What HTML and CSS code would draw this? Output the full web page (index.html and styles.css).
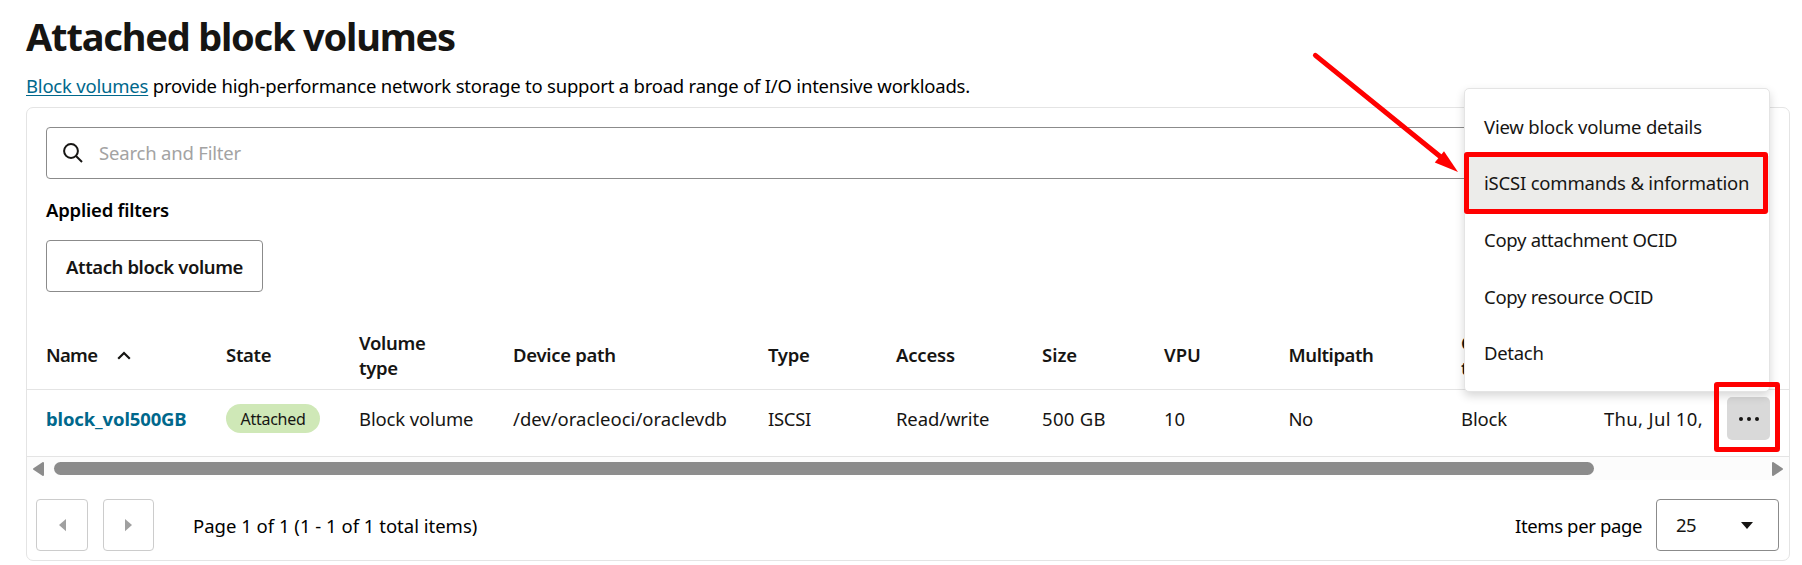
FILE: index.html
```html
<!DOCTYPE html>
<html lang="en">
<head>
<meta charset="utf-8">
<title>Attached block volumes</title>
<link rel="stylesheet" href="styles.css">
</head>
<body>
<main class="page">
  <h1 class="title">Attached block volumes</h1>
  <p class="intro"><a class="intro-link" href="#">Block volumes</a> provide high-performance network storage to support a broad range of I/O intensive workloads.</p>
  <section class="card">
    <div class="search">
      <svg class="search-icon" viewBox="0 0 20 20"><circle cx="8" cy="8" r="6.9"/><path d="M13 13l6 6"/></svg>
      <span class="placeholder">Search and Filter</span>
    </div>
    <h2 class="filters">Applied filters</h2>
    <button class="attach">Attach block volume</button>
    <div class="row head">
      <div class="one name">Name<svg class="sort" viewBox="0 0 14 9"><path d="M1.2 7.8L7 2l5.800 5.800"/></svg></div>
      <div class="one">State</div>
      <div>Volume<br>type</div>
      <div class="one">Device path</div>
      <div class="one">Type</div>
      <div class="one access">Access</div>
      <div class="one plain">Size</div>
      <div class="one plain">VPU</div>
      <div class="one multi">Multipath</div>
      <div class="clip">C<br>t</div>
      <div></div>
    </div>
    <div class="row data">
      <div><a class="vol" href="#">block_vol500GB</a></div>
      <div><span class="pill">Attached</span></div>
      <div>Block volume</div>
      <div class="plain">/dev/oracleoci/oraclevdb</div>
      <div class="iscsi">ISCSI</div>
      <div>Read/write</div>
      <div class="wide">500 GB</div>
      <div>10</div>
      <div class="no">No</div>
      <div>Block</div>
      <div class="wide">Thu, Jul 10,</div>
      <div><button class="more"><i></i><i></i><i></i></button></div>
    </div>
    <div class="scroll">
      <svg class="tri" viewBox="0 0 11 14"><path d="M10 1v12L1 7z"/></svg>
      <div class="thumb"></div>
      <svg class="tri end" viewBox="0 0 11 14"><path d="M1 1v12l9-6z"/></svg>
    </div>
    <div class="pager">
      <button class="nav"><svg class="caret" viewBox="0 0 8 14"><path d="M8 0v14L0 7z"/></svg></button>
      <button class="nav next"><svg class="caret" viewBox="0 0 8 14"><path d="M0 0v14l8-7z"/></svg></button>
      <span class="range">Page 1 of 1 (1 - 1 of 1 total items)</span>
      <span class="per-page">Items per page</span>
      <div class="select">25<svg class="drop" viewBox="0 0 12 7"><path d="M0 0h12L6 7z"/></svg></div>
    </div>
  </section>
</main>
<ul class="menu">
  <li>View block volume details</li>
  <li class="active">iSCSI commands &amp; information</li>
  <li class="tight">Copy attachment OCID</li>
  <li class="tight">Copy resource OCID</li>
  <li class="tight">Detach</li>
</ul>
<svg class="arrow" viewBox="0 0 160 130"><path class="shaft" d="M11.400 10.400L138 113"/><path d="M154 127L130.800 117.500 140 106.300z"/></svg>
<div class="mark mark-item"></div>
<div class="mark mark-more"></div>
</body>
</html>
```
FILE: styles.css
```css
* { box-sizing: border-box; }
body {
  margin: 0;
  height: 565px;
  overflow: hidden;
  background: #fff;
  color: #161513;
  font: 18.5px/24px "Noto Sans", "Open Sans", sans-serif;
}
button { font: inherit; color: inherit; background: #fff; padding: 0; }
.page { padding: 13px 12px 0 26px; }
.title { margin: 0; font-size: 38px; line-height: 46px; font-weight: 700; letter-spacing: -1.2px; white-space: nowrap; }
.intro { margin: 15px 0 9px; color: #000; letter-spacing: -.21px; white-space: nowrap; }
.intro-link { color: #00688c; text-underline-offset: 2px; text-decoration-thickness: 1px; }
.card { height: 454px; border: 1px solid #e4e4e4; border-radius: 7px; }
.search {
  display: flex; align-items: center; height: 52px; margin: 19px 19px 0;
  padding-left: 16px; border: 1px solid #8b8b8b; border-radius: 4px;
}
.search-icon { width: 20px; height: 20px; fill: none; stroke: #161513; stroke-width: 2; }
.placeholder { margin-left: 16px; color: #a3a3a3; letter-spacing: -.19px; }
.filters { margin: 19px 19px 18px; font-size: 18.5px; line-height: 24px; font-weight: 600; color: #000; letter-spacing: -.21px; }
.attach {
  display: block; width: 217px; height: 52px; margin-left: 19px; padding-top: 1px;
  border: 1px solid #8b8b8b; border-radius: 4px; font-weight: 600; letter-spacing: -.4px; white-space: nowrap;
}
.row {
  display: grid; align-items: center; padding-left: 19px;
  grid-template-columns: 180px 133px 154px 255px 128px 146px 122px 124.5px 172.5px 143px 123px 43px;
  border-bottom: 1px solid #e4e4e4; white-space: nowrap;
}
.head { height: 69px; margin-top: 29px; font-weight: 600; line-height: 25px; letter-spacing: -.3px; }
.one { padding-bottom: 2px; }
.name { letter-spacing: -.7px; }
.access { letter-spacing: -.18px; }
.multi { letter-spacing: -.41px; }
.clip { width: 10px; overflow: hidden; }
.sort { width: 14px; height: 9px; margin: 0 0 2px 20px; fill: none; stroke: #161513; stroke-width: 2.200; }
.data { height: 67px; padding-bottom: 9px; letter-spacing: -.14px; }
.vol { color: #00688c; font-weight: 700; text-decoration: none; }
.pill {
  display: flex; align-items: center; justify-content: center; width: 94px; height: 29px;
  border-radius: 15px; background: #cfe8b7; font-size: 16px; letter-spacing: -.27px;
}
.plain { letter-spacing: 0; }
.iscsi { letter-spacing: -.31px; }
.no { letter-spacing: -.6px; }
.wide { letter-spacing: .32px; }
.more {
  display: flex; align-items: center; justify-content: center; gap: 4px;
  width: 43px; height: 43px; border: 0; border-radius: 5px; background: #d9d9d9;
}
.more i { width: 4px; height: 4px; border-radius: 50%; background: #161513; }
.scroll { display: flex; align-items: center; height: 23px; padding: 0 6px; background: #fcfcfc; }
.tri { width: 11px; height: 14px; fill: #8b8b8b; stroke: #8b8b8b; stroke-width: 2; stroke-linejoin: round; }
.end { margin-left: auto; }
.thumb { width: 1540px; height: 13px; margin-left: 10px; border-radius: 7px; background: #8b8b8b; }
.pager { display: flex; align-items: center; margin: 19px 10px 0 9px; color: #000; }
.nav {
  display: flex; align-items: center; justify-content: center; width: 52px; height: 52px;
  margin-right: 15px; border: 1px solid #ccc; border-radius: 4px;
}
.next { width: 51px; }
.caret { width: 7px; height: 14px; fill: #a0a0a0; }
.range { margin-left: 24px; padding-top: 2px; }
.per-page { margin-left: auto; padding-top: 2px; letter-spacing: -.37px; }
.select {
  display: flex; align-items: center; justify-content: space-between; width: 123px; height: 52px;
  margin-left: 14px; padding: 0 25px 0 19px; border: 1px solid #8b8b8b; border-radius: 4px;
  color: #161513; letter-spacing: -.5px;
}
.drop { width: 12px; height: 7px; fill: #161513; }
.menu {
  position: absolute; left: 1464px; top: 88px; width: 306px; height: 304px; margin: 0; padding: 10px 0 0;
  list-style: none; background: #fff; border: 1px solid #e4e4e4; border-radius: 5px;
  box-shadow: 0 4px 10px rgba(0,0,0,.16); letter-spacing: -.2px;
}
.menu li { display: flex; align-items: center; height: 56.500px; padding-left: 19px; white-space: nowrap; }
.menu .active { padding-bottom: 1px; background: #ececea; }
.menu .tight { letter-spacing: -.3px; }
.arrow { position: absolute; left: 1304px; top: 45px; width: 160px; height: 130px; fill: #f00; }
.shaft { stroke: #f00; stroke-width: 5; stroke-linecap: round; }
.mark { position: absolute; border: 5px solid #f00; border-radius: 3px; }
.mark-item { left: 1464px; top: 152px; width: 304px; height: 62px; }
.mark-more { left: 1714px; top: 382px; width: 66px; height: 70px; }
```
